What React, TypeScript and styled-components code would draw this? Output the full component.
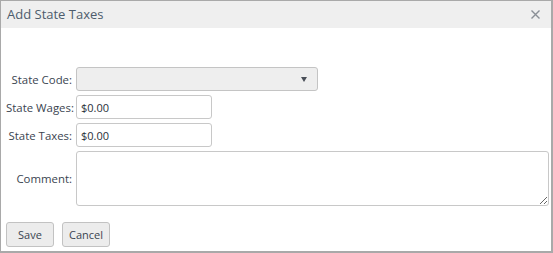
import React from 'react';
import styled, {createGlobalStyle} from 'styled-components';

const GlobalStyle = createGlobalStyle`
    html, body {
        margin: 0;
        padding: 0;
        background: #ffffff;
    }
    body {
        font-family: "Open Sans", "Liberation Sans", sans-serif;
    }
`;

const App: React.FC = () => {
    return (
        <>
            <GlobalStyle/>
            <Window>
                <Header>
                    <Title>Add State Taxes</Title>
                    <CloseButton aria-label="Close">
                        <svg width="9" height="9" viewBox="0 0 9 9">
                            <path d="M0.5 0.5 L8.5 8.5 M8.5 0.5 L0.5 8.5" stroke="#8a8f96" strokeWidth="1.4"/>
                        </svg>
                    </CloseButton>
                </Header>
                <Body>
                    <Form>
                        <Label>State Code:</Label>
                        <Select>
                            <Arrow/>
                        </Select>
                        <Label>State Wages:</Label>
                        <Input defaultValue="$0.00"/>
                        <Label>State Taxes:</Label>
                        <Input defaultValue="$0.00"/>
                        <Label>Comment:</Label>
                        <TextArea/>
                    </Form>
                    <Actions>
                        <Button>Save</Button>
                        <Button>Cancel</Button>
                    </Actions>
                </Body>
            </Window>
        </>
    );
};

export default App;

const Window = styled.div`
    width: 553px;
    height: 253px;
    box-sizing: border-box;
    border: 1px solid #a9a9a9;
    border-right-width: 2px;
    border-bottom-width: 2px;
    display: flex;
    flex-direction: column;
    background: #ffffff;
`;

const Header = styled.div`
    height: 27px;
    background: #efefef;
    display: flex;
    align-items: center;
    justify-content: space-between;
    padding: 0 8px 0 6px;
    box-sizing: border-box;
`;

const Title = styled.h1`
    margin: 0;
    font-size: 13px;
    font-weight: 400;
    color: #4d5c6c;
    padding-bottom: 2px;
`;

const CloseButton = styled.button`
    border: none;
    background: none;
    padding: 0;
    margin-right: 2px;
    width: 11px;
    height: 11px;
    display: flex;
    align-items: center;
    justify-content: center;
    cursor: pointer;
`;

const Body = styled.div`
    flex: 1;
    padding: 39px 3px 0 5px;
    display: flex;
    flex-direction: column;
`;

const Form = styled.div`
    display: grid;
    grid-template-columns: 66px 1fr;
    column-gap: 4px;
    row-gap: 4px;
    align-items: center;
`;

const Label = styled.label`
    text-align: right;
    font-size: 11.4px;
    color: #3a4450;
    white-space: nowrap;
`;

const Select = styled.div`
    position: relative;
    width: 242px;
    height: 24px;
    box-sizing: border-box;
    border: 1px solid #c4c4c4;
    border-radius: 3px;
    background: #eeeeee;
`;

const Arrow = styled.span`
    position: absolute;
    right: 10px;
    top: 9px;
    width: 0;
    height: 0;
    border-left: 3.5px solid transparent;
    border-right: 3.5px solid transparent;
    border-top: 5px solid #4a4f58;
`;

const Input = styled.input`
    width: 136px;
    height: 24px;
    box-sizing: border-box;
    border: 1px solid #c8c8c8;
    border-radius: 3px;
    padding: 0 4px;
    font-family: "Open Sans", "Liberation Sans", sans-serif;
    font-size: 11px;
    color: #2a313a;
    outline: none;
`;

const TextArea = styled.textarea`
    width: 473px;
    height: 55px;
    box-sizing: border-box;
    border: 1px solid #c8c8c8;
    border-radius: 3px;
    resize: both;
    font-family: "Open Sans", "Liberation Sans", sans-serif;
    outline: none;
`;

const Actions = styled.div`
    display: flex;
    gap: 8px;
    margin-top: 16px;
`;

const Button = styled.button`
    width: 48px;
    height: 25px;
    box-sizing: border-box;
    border: 1px solid #c2c2c2;
    border-radius: 3px;
    background: #ececec;
    font-family: "Open Sans", "Liberation Sans", sans-serif;
    font-size: 11px;
    color: #3a4450;
    padding: 0;
    cursor: pointer;
`;
